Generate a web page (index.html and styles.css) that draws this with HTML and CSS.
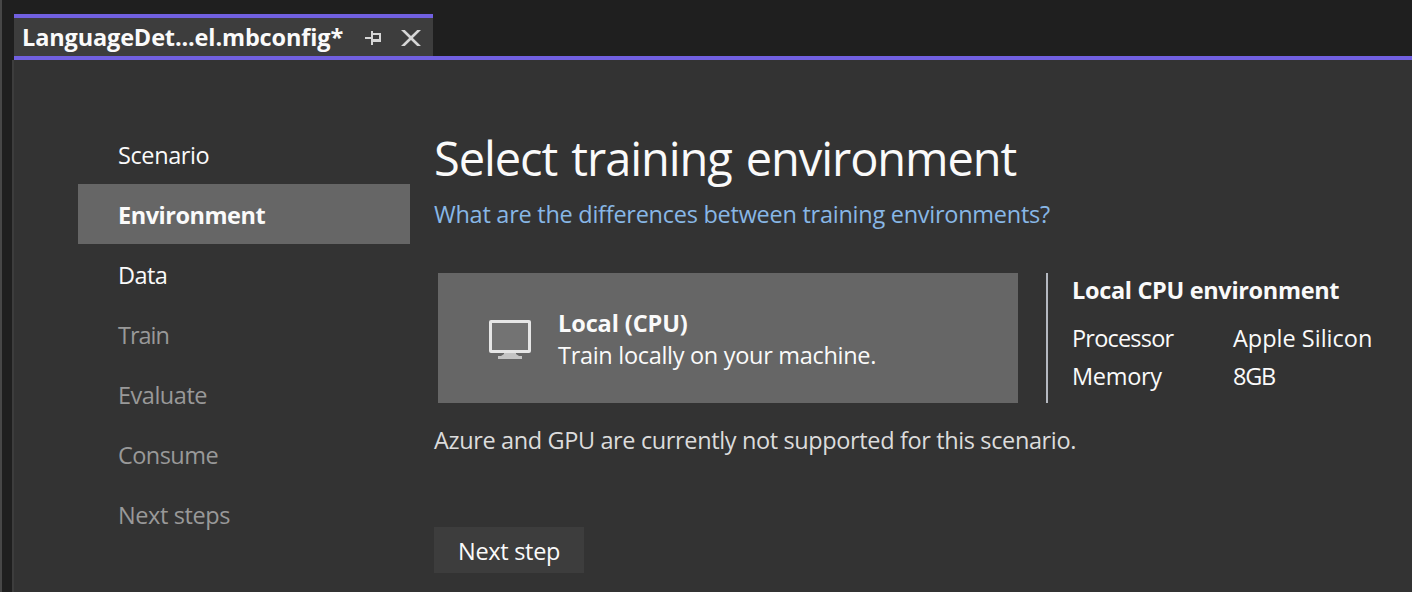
FILE: index.html
```html
<!DOCTYPE html>
<html lang="en">
<head>
<meta charset="utf-8">
<title>Model Builder</title>
<link rel="stylesheet" href="styles.css">
</head>
<body>
<div class="window">
  <header class="tabs">
    <div class="tab">
      <span class="tab-name">LanguageDet...el.mbconfig*</span>
      <svg class="pin" width="17" height="14" viewBox="0 0 17 14"><path d="M0 6h6V0h2v2h8v9H8v3H6V8H0zM8 4v4h6V4z" fill="#d6d6d6" fill-rule="evenodd"/></svg>
      <svg class="close" width="20" height="16" viewBox="0 0 20 16"><path d="M0 0h3.800L10 6 16.200 0H20l-8.100 8L20 16h-3.800L10 10 3.800 16H0l8.100-8z" fill="#d6d6d6"/></svg>
    </div>
  </header>
  <div class="panel">
    <nav class="steps">
      <div class="step"><span class="scenario">Scenario</span></div>
      <div class="step active"><span class="environment">Environment</span></div>
      <div class="step"><span class="data">Data</span></div>
      <div class="step disabled"><span class="train">Train</span></div>
      <div class="step disabled"><span class="evaluate">Evaluate</span></div>
      <div class="step disabled"><span class="consume">Consume</span></div>
      <div class="step disabled"><span class="next-steps">Next steps</span></div>
    </nav>
    <main class="content">
      <h1 class="title">Select training environment</h1>
      <a class="link">What are the differences between training environments?</a>
      <div class="row">
        <div class="card">
          <svg class="monitor" width="42" height="40" viewBox="0 0 42 40"><path d="M15 33h12v1l3 2h3v3H9v-3h3l3-2z" fill="#c4c4c4"/><rect x="1.5" y="1.5" width="39" height="30" rx=".5" fill="#737373" stroke="#e6e6e6" stroke-width="3"/></svg>
          <div class="card-text">
            <div class="card-name">Local (CPU)</div>
            <div class="card-desc">Train locally on your machine.</div>
          </div>
        </div>
        <section class="details">
          <h2 class="details-title">Local CPU environment</h2>
          <div class="spec"><span class="processor">Processor</span><span class="silicon">Apple Silicon</span></div>
          <div class="spec"><span class="memory">Memory</span><span class="size">8GB</span></div>
        </section>
      </div>
      <p class="note">Azure and GPU are currently not supported for this scenario.</p>
      <button class="next"><span>Next step</span></button>
    </main>
  </div>
</div>
</body>
</html>
```
FILE: styles.css
```css
* { box-sizing: border-box; }
body {
  margin: 0;
  background: #1f1f1f;
  color: #fafafa;
  font-family: "Open Sans", "Noto Sans", sans-serif;
  font-size: 23.5px;
  line-height: 32px;
  white-space: nowrap;
}
.window {
  height: 592px;
  display: flex;
  flex-direction: column;
  border-left: 2px solid #474747;
  overflow: hidden;
}
.tabs {
  height: 60px;
  margin-left: 12px;
  padding-top: 14px;
  border-bottom: 4px solid #7160e0;
}
.tab {
  width: 419px;
  height: 42px;
  display: flex;
  align-items: center;
  padding: 2px 12px 0 8px;
  background: #3d3d3d;
  border-top: 4px solid #7160e0;
}
.tab-name {
  width: 343px;
  margin-bottom: 2px;
  font-weight: 700;
  letter-spacing: -.14px;
}
.close { margin-left: 19px; }
.panel {
  flex: 1;
  display: flex;
  margin-left: 10px;
  border-left: 2px solid #3d3d3d;
  background: #333;
}
.steps { width: 332px; margin: 64px 24px 0 64px; }
.step { height: 60px; padding: 16px 0 0 40px; line-height: 30px; }
.active { background: #666; font-weight: 700; }
.disabled { color: #999; }
.scenario, .next-steps { letter-spacing: -.4px; }
.environment, .evaluate { letter-spacing: -.48px; }
.data, .consume { letter-spacing: -.55px; }
.train { letter-spacing: -1px; }
.content { width: 976px; }
.title {
  margin: 66px 0 0;
  font-size: 47px;
  font-weight: 400;
  line-height: 64px;
  letter-spacing: -1.08px;
  word-spacing: 3px;
}
.link {
  display: block;
  margin-top: 8px;
  color: #88b7e6;
  letter-spacing: -.26px;
}
.row { display: flex; margin: 43px 0 0 4px; height: 130px; }
.card {
  width: 580px;
  display: flex;
  padding: 34px 0 0 51px;
  background: #666;
}
.monitor { margin: 13px 27px 0 0; }
.card-name, .details-title { font-weight: 700; }
.card-name { letter-spacing: -.1px; }
.card-desc { letter-spacing: -.3px; }
.details { margin-left: 28px; padding-left: 24px; border-left: 2px solid #b5b9c1; }
.details-title { margin: 1px 0 13px; font-size: inherit; letter-spacing: -.33px; }
.spec { display: grid; grid-template-columns: 161px auto; line-height: 38px; }
.spec span { justify-self: start; }
.processor { letter-spacing: -.8px; }
.memory { letter-spacing: -.3px; }
.size { letter-spacing: -1.2px; }
.note { margin: 21px 0 0; color: #dcdcdc; letter-spacing: -.37px; }
.next {
  display: block;
  width: 150px;
  height: 46px;
  margin-top: 71px;
  padding: 1px 0 0 24px;
  border: 0;
  background: #3d3d3d;
  color: #fafafa;
  font: inherit;
  letter-spacing: -.3px;
  text-align: left;
}
```
